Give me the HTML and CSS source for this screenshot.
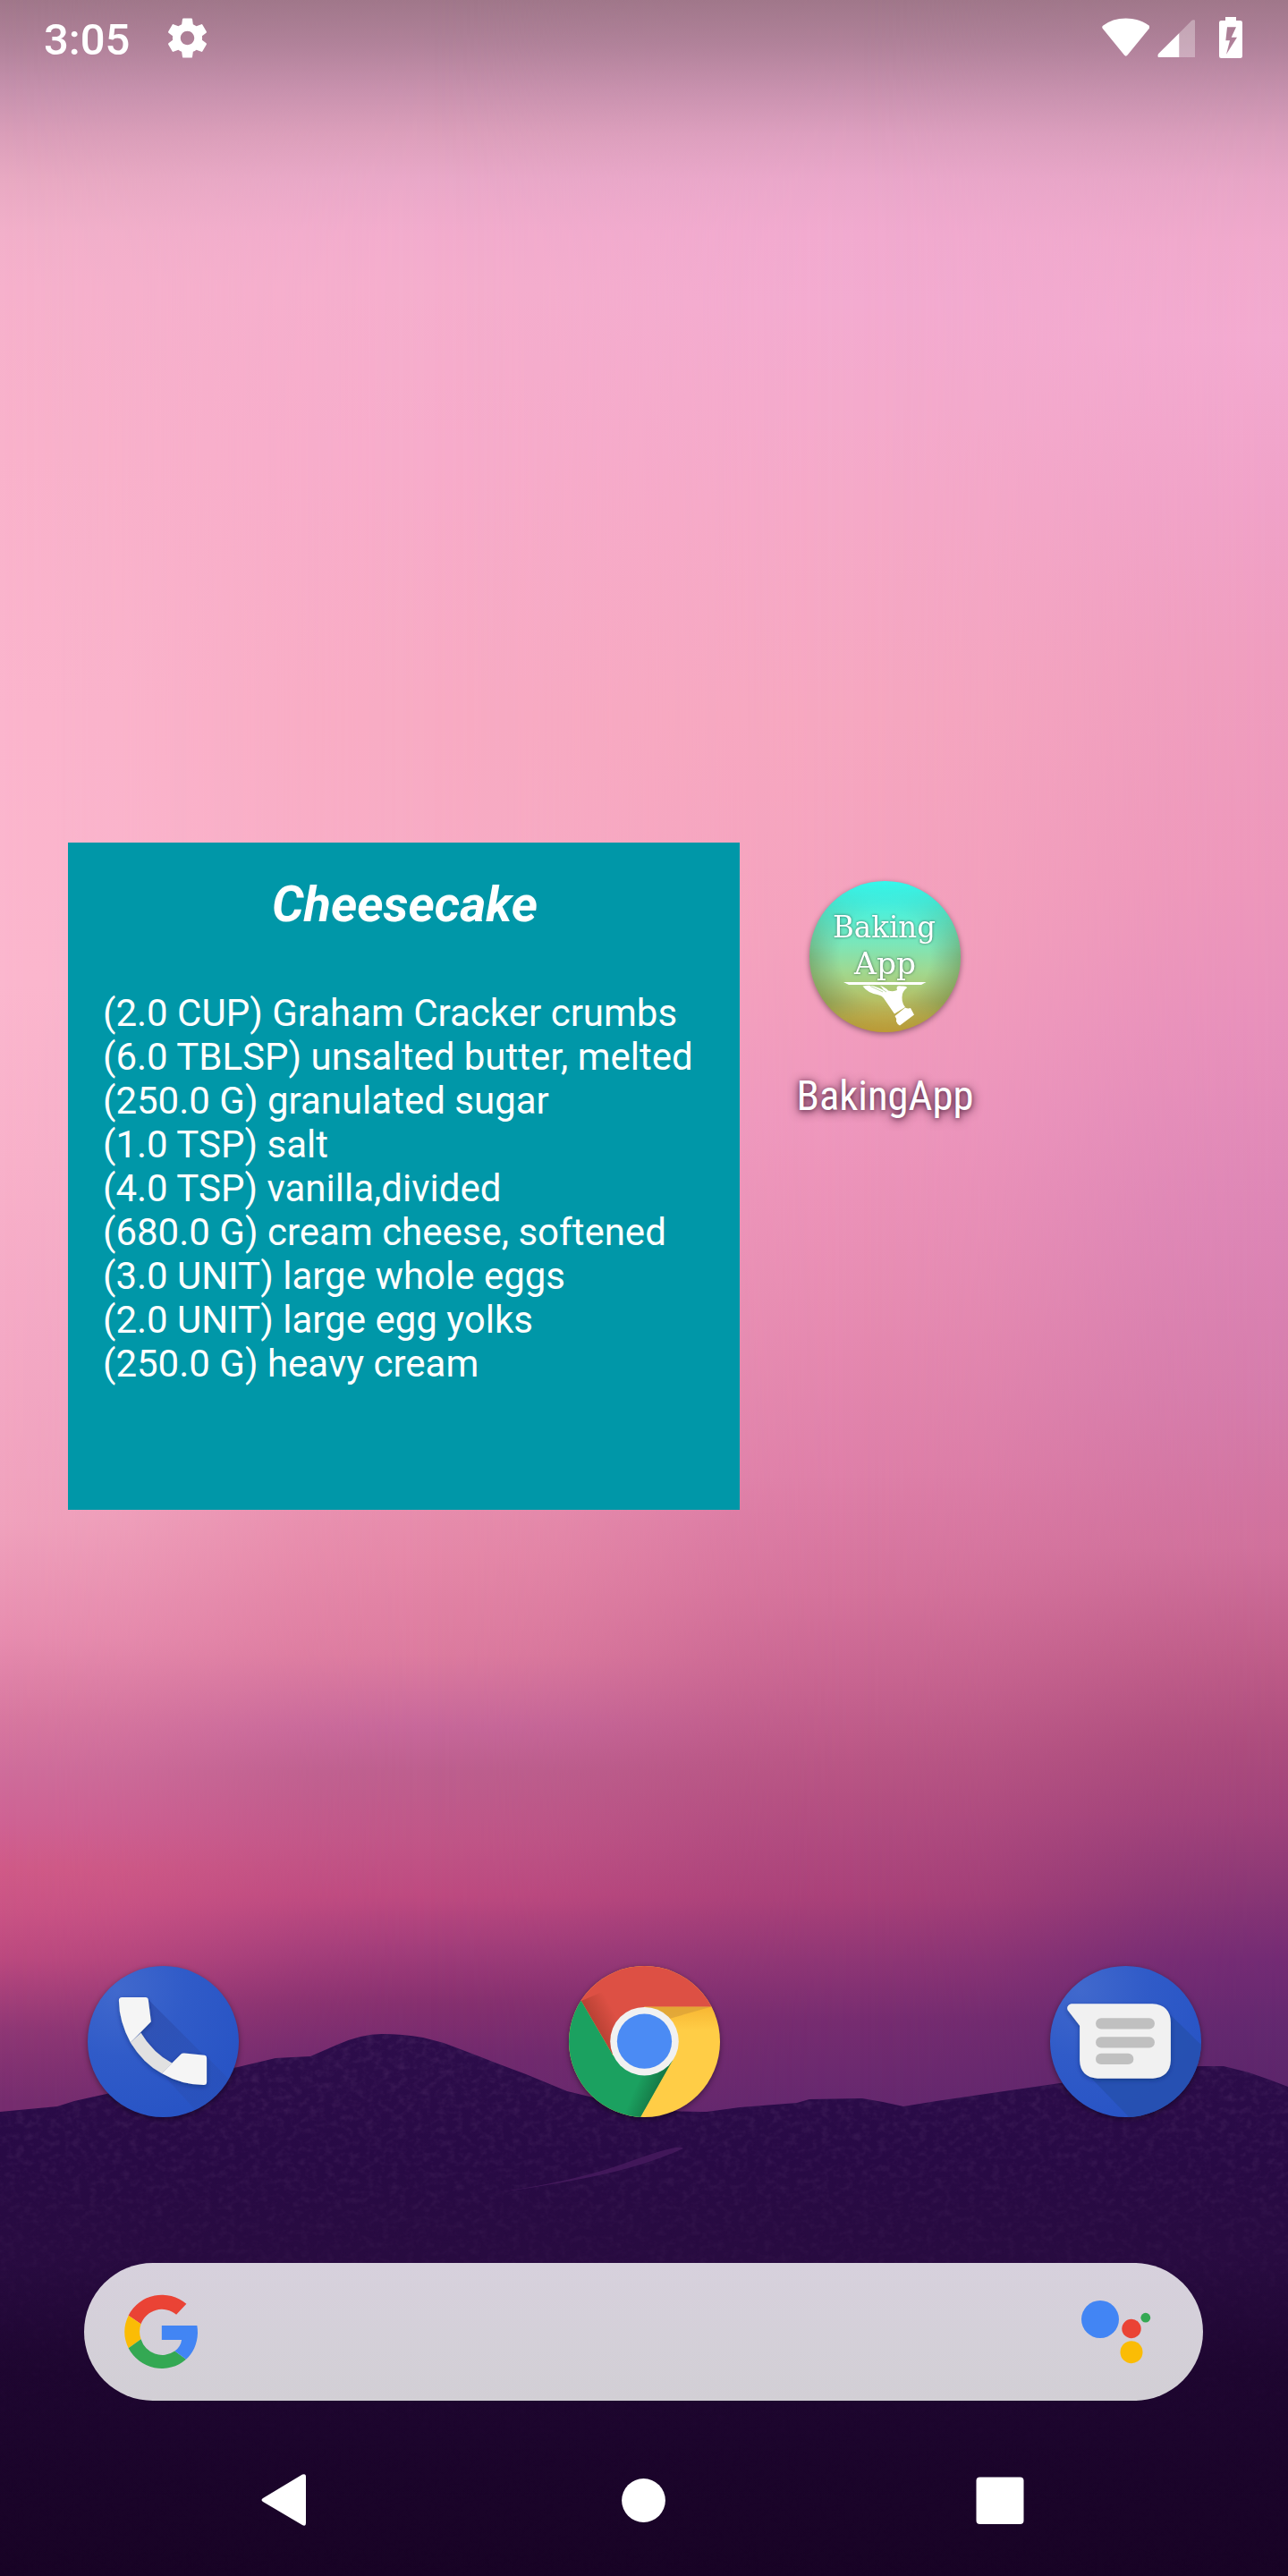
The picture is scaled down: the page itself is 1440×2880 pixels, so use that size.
FILE: index.html
```html
<!DOCTYPE html>
<html lang="en">
<head>
<meta charset="utf-8">
<title>Home screen</title>
<link rel="stylesheet" href="styles.css">
</head>
<body>
<div class="phone">
  <div class="wallpaper">
    <div class="sky sky-1"></div>
    <div class="sky sky-2"></div>
    <div class="sky sky-3"></div>
    <div class="sky sky-4"></div>
    <svg class="hills" viewBox="0 2240 1440 640">
      <defs>
        <linearGradient id="ground" x1="0" y1="0" x2="0" y2="1">
          <stop offset="0" stop-color="#2d0d4b"/>
          <stop offset=".22" stop-color="#280a45"/>
          <stop offset=".42" stop-color="#280b40"/>
          <stop offset=".62" stop-color="#1e0630"/>
          <stop offset="1" stop-color="#180325"/>
        </linearGradient>
        <linearGradient id="fade" x1="0" y1="0" x2="0" y2="1">
          <stop offset="0" stop-color="#fff"/>
          <stop offset=".3" stop-color="#aaa"/>
          <stop offset=".5" stop-color="#333"/>
          <stop offset=".8" stop-color="#111"/>
        </linearGradient>
        <filter id="grain" x="0" y="0" width="1" height="1">
          <feTurbulence type="fractalNoise" baseFrequency=".11 .14" numOctaves="3" seed="4"/>
          <feColorMatrix values="0 0 0 0 .34  0 0 0 0 .16  0 0 0 0 .38  1.6 0 0 0 -.66"/>
        </filter>
        <clipPath id="ridge"><path d="M0 2361 64 2355 83 2349 119 2341 190 2325 266 2311 308 2301 347 2299 377 2286Q404 2274 427 2274T473 2278L496 2284 533 2298 556 2307 588 2319 634 2338 680 2349Q735 2362 790 2361L827 2356 891 2351 905 2347 964 2346 987 2350 1010 2355 1047 2349 1102 2341 1185 2329 1341 2310 1368 2310 1396 2317 1419 2325 1440 2333V2880H0Z"/></clipPath>
        <mask id="fademask"><rect y="2260" width="1440" height="620" fill="url(#fade)"/></mask>
      </defs>
      <g clip-path="url(#ridge)">
        <rect y="2270" width="1440" height="610" fill="url(#ground)"/>
        <g mask="url(#fademask)"><rect y="2270" width="1440" height="610" filter="url(#grain)" opacity=".2"/></g>
        <path d="M548 2452Q640 2440 700 2418T764 2402Q720 2422 660 2434T548 2452Z" fill="#491c60" opacity=".75"/>
      </g>
    </svg>
  </div>

  <header class="status">
    <span class="clock">3:05</span>
    <svg class="gear" viewBox="0 0 24 24"><path fill="#fff" d="M19.43 12.98c.04-.32.07-.64.07-.98s-.03-.66-.07-.98l2.11-1.65c.19-.15.24-.42.12-.64l-2-3.46c-.12-.22-.39-.3-.61-.22l-2.49 1c-.52-.4-1.08-.73-1.69-.98l-.38-2.65C14.46 2.18 14.25 2 14 2h-4c-.25 0-.46.18-.49.42l-.38 2.65c-.61.25-1.17.59-1.69.98l-2.49-1c-.23-.09-.49 0-.61.22l-2 3.46c-.13.22-.07.49.12.64l2.11 1.65c-.04.32-.07.65-.07.98s.03.66.07.98l-2.11 1.65c-.19.15-.24.42-.12.64l2 3.46c.12.22.39.3.61.22l2.49-1c.52.4 1.08.73 1.69.98l.38 2.65c.03.24.24.42.49.42h4c.25 0 .46-.18.49-.42l.38-2.65c.61-.25 1.17-.59 1.69-.98l2.49 1c.23.09.49 0 .61-.22l2-3.46c.12-.22.07-.49-.12-.64l-2.11-1.65zM12 15.5c-1.93 0-3.5-1.57-3.5-3.5s1.57-3.5 3.5-3.5 3.5 1.57 3.5 3.5-1.57 3.5-3.5 3.5z"/></svg>
    <svg class="wifi" viewBox="155 58 161 129"><path fill="#fff" d="M158 84Q190 59 235.500 59T314 84Q317 88 314 93L241 183Q235.500 190 230 183L157 93Q154 88 158 84Z"/></svg>
    <svg class="signal" viewBox="341 65 127 128"><path fill="#fff" fill-opacity=".32" d="M414 110 455 69Q458 66 461 66H464Q468 66 468 70V187Q468 192 463 192H414Z"/><path fill="#fff" d="M414 110V192H346Q342 192 342 188V185Q342 182 345 179Z"/></svg>
    <svg class="battery" viewBox="549 57 78 138"><path fill="#fff" fill-rule="evenodd" d="M570 57H606V69H620Q627 69 627 76V188Q627 195 620 195H556Q549 195 549 188V76Q549 69 556 69H570ZM576 91 571 136H585L573 182 609 125H590L606 91Z"/></svg>
  </header>

  <main class="workspace">
    <section class="widget">
      <h1 class="recipe">Cheesecake</h1>
      <ul class="ingredients">
        <li>(2.0 CUP) Graham Cracker crumbs</li>
        <li>(6.0 TBLSP) unsalted butter, melted</li>
        <li>(250.0 G) granulated sugar</li>
        <li>(1.0 TSP) salt</li>
        <li>(4.0 TSP) vanilla,divided</li>
        <li>(680.0 G) cream cheese, softened</li>
        <li>(3.0 UNIT) large whole eggs</li>
        <li>(2.0 UNIT) large egg yolks</li>
        <li>(250.0 G) heavy cream</li>
      </ul>
    </section>
    <div class="app">
      <svg class="launcher" viewBox="0 0 169 169">
        <defs>
          <linearGradient id="bake" x1="0" y1="0" x2="0" y2="1">
            <stop offset="0" stop-color="#34f8ee"/>
            <stop offset=".14" stop-color="#42f2e2"/>
            <stop offset=".42" stop-color="#7ce6b8"/>
            <stop offset=".6" stop-color="#a0d890"/>
            <stop offset=".78" stop-color="#b4c066"/>
            <stop offset=".9" stop-color="#cbb248"/>
            <stop offset="1" stop-color="#c99f35"/>
          </linearGradient>
          <radialGradient id="vignette">
            <stop offset=".6" stop-color="#55705a" stop-opacity="0"/>
            <stop offset="1" stop-color="#55703a" stop-opacity=".4"/>
          </radialGradient>
          <linearGradient id="vfade" x1="0" y1="0" x2="0" y2="1"><stop offset="0" stop-color="#000"/><stop offset=".5" stop-color="#fff"/><stop offset=".8" stop-color="#fff"/><stop offset="1" stop-color="#444"/></linearGradient>
          <mask id="vmask"><rect width="169" height="169" fill="url(#vfade)"/></mask>
        </defs>
        <circle cx="84.500" cy="84.500" r="84.500" fill="url(#bake)"/>
        <g mask="url(#vmask)"><circle cx="84.500" cy="84.500" r="84.500" fill="url(#vignette)"/></g>
        <text class="badge" x="26" y="63" textLength="115" lengthAdjust="spacingAndGlyphs">Baking</text>
        <text class="badge" x="50" y="104" textLength="69" lengthAdjust="spacingAndGlyphs">App</text>
        <g fill="#fff">
          <path d="M38 113H130.500L125 116H44Z"/>
          <path d="M59.500 117.500Q66 116 72 117.500L83 121.500 79 117Q85 119 88 122.500Q94 124 98 122Q96 116 103 117.500Q109 117 109 119.500Q106 121 104 126Q102 135 107 141L95 148.500 83 131Q81 128 76 127Q65 125 59.500 117.500Z"/>
          <path d="M95.500 151 107 141.500Q110 143 113 142L117 149.500 101 161.500Q98 160 97 157Q98 154 95.500 151Z"/>
        </g>
        <path d="M68 117.500 82 124M74 116.500 86 124" stroke="#a5cc85" stroke-width=".7"/>
      </svg>
      <svg class="app-name" viewBox="0 0 220 64"><text x="10.500" y="46" textLength="198" lengthAdjust="spacingAndGlyphs">BakingApp</text></svg>
    </div>
  </main>

  <nav class="dock">
    <svg class="launcher" viewBox="54 53 508 508">
      <defs>
        <radialGradient id="blue" cx=".2" cy=".15" r=".9"><stop offset="0" stop-color="#4169cd"/><stop offset=".5" stop-color="#305bc8"/><stop offset="1" stop-color="#2854c5"/></radialGradient>
        <clipPath id="disc"><circle cx="308" cy="307" r="254"/></clipPath>
        <linearGradient id="cast" gradientUnits="userSpaceOnUse" x1="220" y1="220" x2="470" y2="500"><stop offset="0" stop-color="#2c4aa8" stop-opacity=".65"/><stop offset="1" stop-color="#2a4ba8" stop-opacity=".25"/></linearGradient>
        <filter id="soft" x="-.2" y="-.2" width="1.4" height="1.5"><feDropShadow dx="0" dy="6" stdDeviation="8" flood-color="#0e2560" flood-opacity=".45"/></filter>
      </defs>
      <circle cx="308" cy="307" r="254" fill="url(#blue)"/>
      <g clip-path="url(#disc)"><path d="M256 164 440 348 454 358 560 464V561H438L303 414 233 278Z" fill="url(#cast)"/></g>
      <g filter="url(#soft)">
        <path fill="#f5f5f5" d="M159 170Q158 158 170 158H248Q257 158 258 168L267 240 198 310Q160 240 159 170Z"/>
        <path fill="#f5f5f5" d="M303 414 367 350Q372 345 379 346L446 353Q454 354 454 363V443Q454 453 444 453Q370 453 303 414Z"/>
        <path fill="#e1e1e1" d="M198 310 233 278Q275 347 338 380L303 414Q240 380 198 310Z"/>
      </g>
    </svg>
    <svg class="launcher" viewBox="62.500 53 508 508">
      <defs>
        <linearGradient id="redshade" gradientUnits="userSpaceOnUse" x1="150" y1="262" x2="222" y2="222"><stop offset="0" stop-color="#a63a2c" stop-opacity=".7"/><stop offset="1" stop-color="#a63a2c" stop-opacity="0"/></linearGradient>
        <linearGradient id="greenshade" gradientUnits="userSpaceOnUse" x1="362" y1="480" x2="290" y2="450"><stop offset="0" stop-color="#12683c" stop-opacity=".75"/><stop offset="1" stop-color="#12683c" stop-opacity="0"/></linearGradient>
        <linearGradient id="yellowshade" gradientUnits="userSpaceOnUse" x1="0" y1="190" x2="0" y2="270"><stop offset="0" stop-color="#f0a020" stop-opacity=".5"/><stop offset="1" stop-color="#f0a020" stop-opacity="0"/></linearGradient>
        <clipPath id="disc3"><circle cx="316.500" cy="307" r="254"/></clipPath>
      </defs>
      <g clip-path="url(#disc3)">
        <rect x="62" y="53" width="510" height="510" fill="#ffcd46"/>
        <path d="M316 190H572V270H316Z" fill="url(#yellowshade)"/>
        <path d="M320 190H542L400 230Z" fill="#d79c38" opacity=".65"/>
        <path d="M104 170 62 100V50H572V190H316V307L208 348Z" fill="#dd5044"/>
        <path d="M104 170 208 348 260 300 200 130Z" fill="url(#redshade)"/>
        <path d="M104 170 210 352 316 420 413 366 303 561V570H50V170Z" fill="#1ba160"/>
        <path d="M413 366 303 561 240 550 316 410Z" fill="url(#greenshade)"/>
      </g>
      <circle cx="316.500" cy="306" r="115" fill="#f1f1f1"/>
      <circle cx="316.500" cy="306" r="92" fill="#4b8bf4"/>
    </svg>
    <svg class="launcher" viewBox="56.500 53 508 508">
      <clipPath id="disc2"><circle cx="310.500" cy="307" r="254"/></clipPath>
      <circle cx="310.500" cy="307" r="254" fill="url(#blue)"/>
      <g clip-path="url(#disc2)"><path d="M448 205 580 333V575H336L190 425Z" fill="#2650ae" opacity=".85"/></g>
      <path filter="url(#soft)" fill="#f1f1f1" d="M128 180H400Q462 184 462 244V370Q460 426 402 431H216Q158 426 156 370V254L116 202Q109 186 128 180Z"/>
      <g fill="#c0c0c0"><rect x="210" y="228" width="198" height="37" rx="18"/><rect x="210" y="291" width="198" height="37" rx="18"/><rect x="210" y="347" width="127" height="37" rx="18"/></g>
    </svg>
  </nav>

  <div class="search">
    <svg class="google" viewBox="0 0 247 252">
      <path fill="#ea4335" d="M14 71A126 126 0 0 1 209 32L175 68A75 75 0 0 0 56 100Z"/>
      <path fill="#fbbc05" d="M14 71A126 126 0 0 0 14 181L56 151A75 75 0 0 1 56 100Z"/>
      <path fill="#34a853" d="M14 181A126 126 0 0 0 208 219L170 191A75 75 0 0 1 56 151Z"/>
      <path fill="#4285f4" d="M126 105H245Q247 116 247 130C246 168 230 200 208 219L170 191C183 182 191 168 193 153H126Z"/>
    </svg>
    <svg class="assistant" viewBox="0 0 78 71">
      <circle cx="21" cy="21" r="21" fill="#4285f4"/>
      <circle cx="56" cy="31.500" r="10.700" fill="#ea4335"/>
      <circle cx="71.800" cy="19.200" r="5.400" fill="#34a853"/>
      <circle cx="56" cy="57.700" r="12.500" fill="#fbbc05"/>
    </svg>
  </div>

  <footer class="navbar">
    <svg viewBox="0 0 60 60"><path fill="#fff" d="M7 28 51 1.600Q55 0 55 4V56Q55 60 51 58L7 32Q4 30 7 28Z"/></svg>
    <svg viewBox="0 0 60 60"><circle cx="31.500" cy="30.500" r="24.400" fill="#fff"/></svg>
    <svg viewBox="0 0 60 60"><rect x="3.500" y="4.500" width="53" height="52.500" rx="4" fill="#fff"/></svg>
  </footer>
</div>
</body>
</html>
```

FILE: styles.css
```css
* { box-sizing: border-box; }
body { margin: 0; font-family: Roboto, "Liberation Sans", sans-serif; color: #fff; }
svg { display: block; flex: none; }

.phone { position: relative; width: 1440px; height: 2880px; overflow: hidden; display: flex; flex-direction: column; }
.wallpaper { position: absolute; inset: 0; z-index: -1; }

/* Four vertical ramps, eased into each other from left to right */
.sky { position: absolute; inset: 0; --x: 0px;
  --ease: linear-gradient(to right, transparent var(--x), rgba(0, 0, 0, .06) calc(var(--x) + 60px), rgba(0, 0, 0, .2) calc(var(--x) + 144px), rgba(0, 0, 0, .5) calc(var(--x) + 240px), rgba(0, 0, 0, .8) calc(var(--x) + 336px), rgba(0, 0, 0, .94) calc(var(--x) + 420px), #000 calc(var(--x) + 480px)); }
.sky-1 { background: linear-gradient(#a0778a 0, #b1829a 50px, #c691ad 100px, #da9eb9 150px, #e8a9c2 200px, #f2b0ca 260px, #f6b1cc 320px, #f9b2cb 500px, #fbb5cd 800px, #fbb7ce 1100px, #f8b1ca 1300px, #f4a9c5 1500px, #f0a2bd 1700px, #e78daf 1830px, #d878a0 1920px, #cf6d9b 1980px, #cf6293 2040px, #d05a87 2090px, #c95385 2140px, #bb497f 2190px, #8f3775 2270px, #762d6f 2350px); }
.sky-2 { --x: 0px; background: linear-gradient(#a0778a 0, #b1829a 50px, #c891ad 100px, #dc9fbb 150px, #e9a8c8 200px, #f2accd 260px, #f5aecd 320px, #f7accb 500px, #f8abc3 800px, #f8acc5 1000px, #f2a2bf 1300px, #ea95b4 1600px, #e588a8 1740px, #dc7b9f 1850px, #c7689a 1930px, #bd5f8e 1980px, #c05587 2060px, #bd4a80 2120px, #a13d7a 2180px, #86306f 2240px, #712a6e 2300px, #67296d 2370px);
  -webkit-mask: var(--ease); mask: var(--ease); }
.sky-3 { --x: 480px; background: linear-gradient(#a0778a 0, #b1829a 50px, #c891ae 100px, #dd9fbf 150px, #eaa7ca 200px, #f1aacf 260px, #f3abd0 340px, #f5a9c8 560px, #f6a7c0 800px, #f4a1bd 1050px, #ee97bd 1250px, #e78cb2 1450px, #de7fa8 1650px, #d4729b 1780px, #c76490 1880px, #b95685 1970px, #b04b7f 2050px, #a94179 2120px, #8f3675 2190px, #762c70 2260px, #62276e 2370px);
  -webkit-mask: var(--ease); mask: var(--ease); }
.sky-4 { --x: 960px; background: linear-gradient(#a0778a 0, #b0819a 50px, #c590ac 100px, #d99dbb 150px, #e7a5c6 200px, #f0a9cc 270px, #f3aad0 380px, #f0a2c8 560px, #ef9dbe 750px, #ed97bb 980px, #e790bb 1150px, #dc85b5 1380px, #d57cab 1560px, #d0719c 1730px, #bf5d89 1850px, #ac4c7d 1950px, #9f427a 2030px, #8a3775 2110px, #732b74 2190px, #62286f 2270px, #5a2569 2350px);
  -webkit-mask: var(--ease); mask: var(--ease); }
.hills { position: absolute; left: 0; bottom: 0; width: 1440px; height: 640px; }

.status { height: 84px; display: flex; align-items: flex-start; padding: 0 51px 0 49px; }
.clock { font-size: 49px; font-weight: 500; line-height: 58px; margin-top: 15.500px; width: 134px; white-space: nowrap; }
.gear { width: 53px; height: 53px; margin-top: 15.500px; }
.wifi { width: 53.500px; height: 43px; margin: 19.500px 8.500px 0 auto; }
.signal { width: 42.500px; height: 42.500px; margin: 21.500px 27px 0 0; }
.battery { width: 26px; height: 46px; margin-top: 19px; }

.workspace { height: 2114px; padding: 858px 0 0 76px; display: flex; align-items: flex-start; }
.widget { width: 751px; height: 746px; background: #0097a8; padding: 36px 37px 0 39px; }
.recipe { margin: 0 0 64px; font-size: 56px; line-height: 66px; font-weight: 700; font-style: italic; text-align: center; }
.ingredients { list-style: none; margin: 0; padding: 0; font-size: 42px; line-height: 49px; white-space: nowrap; }
.app { margin: 43px 0 0 52px; width: 221px; display: flex; flex-direction: column; align-items: center; }
.launcher { width: 169px; height: 169px; filter: drop-shadow(0 2px 3px rgba(0, 0, 0, .4)); }
.badge { font-family: "DejaVu Serif", serif; font-size: 34px; fill: #fff; filter: drop-shadow(0 0 1.500px rgba(30, 70, 60, .75)); }
.app-name { width: 220px; height: 64px; margin-top: 41px; overflow: visible; font-family: "Roboto Condensed", Roboto, sans-serif; font-size: 47px; fill: #fff; text-shadow: 0 2px 12px rgba(40, 0, 30, .8), 0 1px 5px rgba(40, 0, 30, .5); }

.dock { display: flex; justify-content: space-between; padding: 0 97px 0 98px; }
.search { width: 1251px; height: 154px; margin: 163px 0 0 94px; border-radius: 77px; background: linear-gradient(#d7d1dd, #d2cfd5); display: flex; align-items: center; justify-content: space-between; padding: 0 58px 0 45px; }
.google { width: 82px; height: 84px; }
.assistant { width: 78px; height: 71px; }
.navbar { display: flex; justify-content: space-between; align-items: center; margin-top: 81px; padding: 0 292px 0 287px; }
.navbar svg { width: 60px; height: 60px; }
```
